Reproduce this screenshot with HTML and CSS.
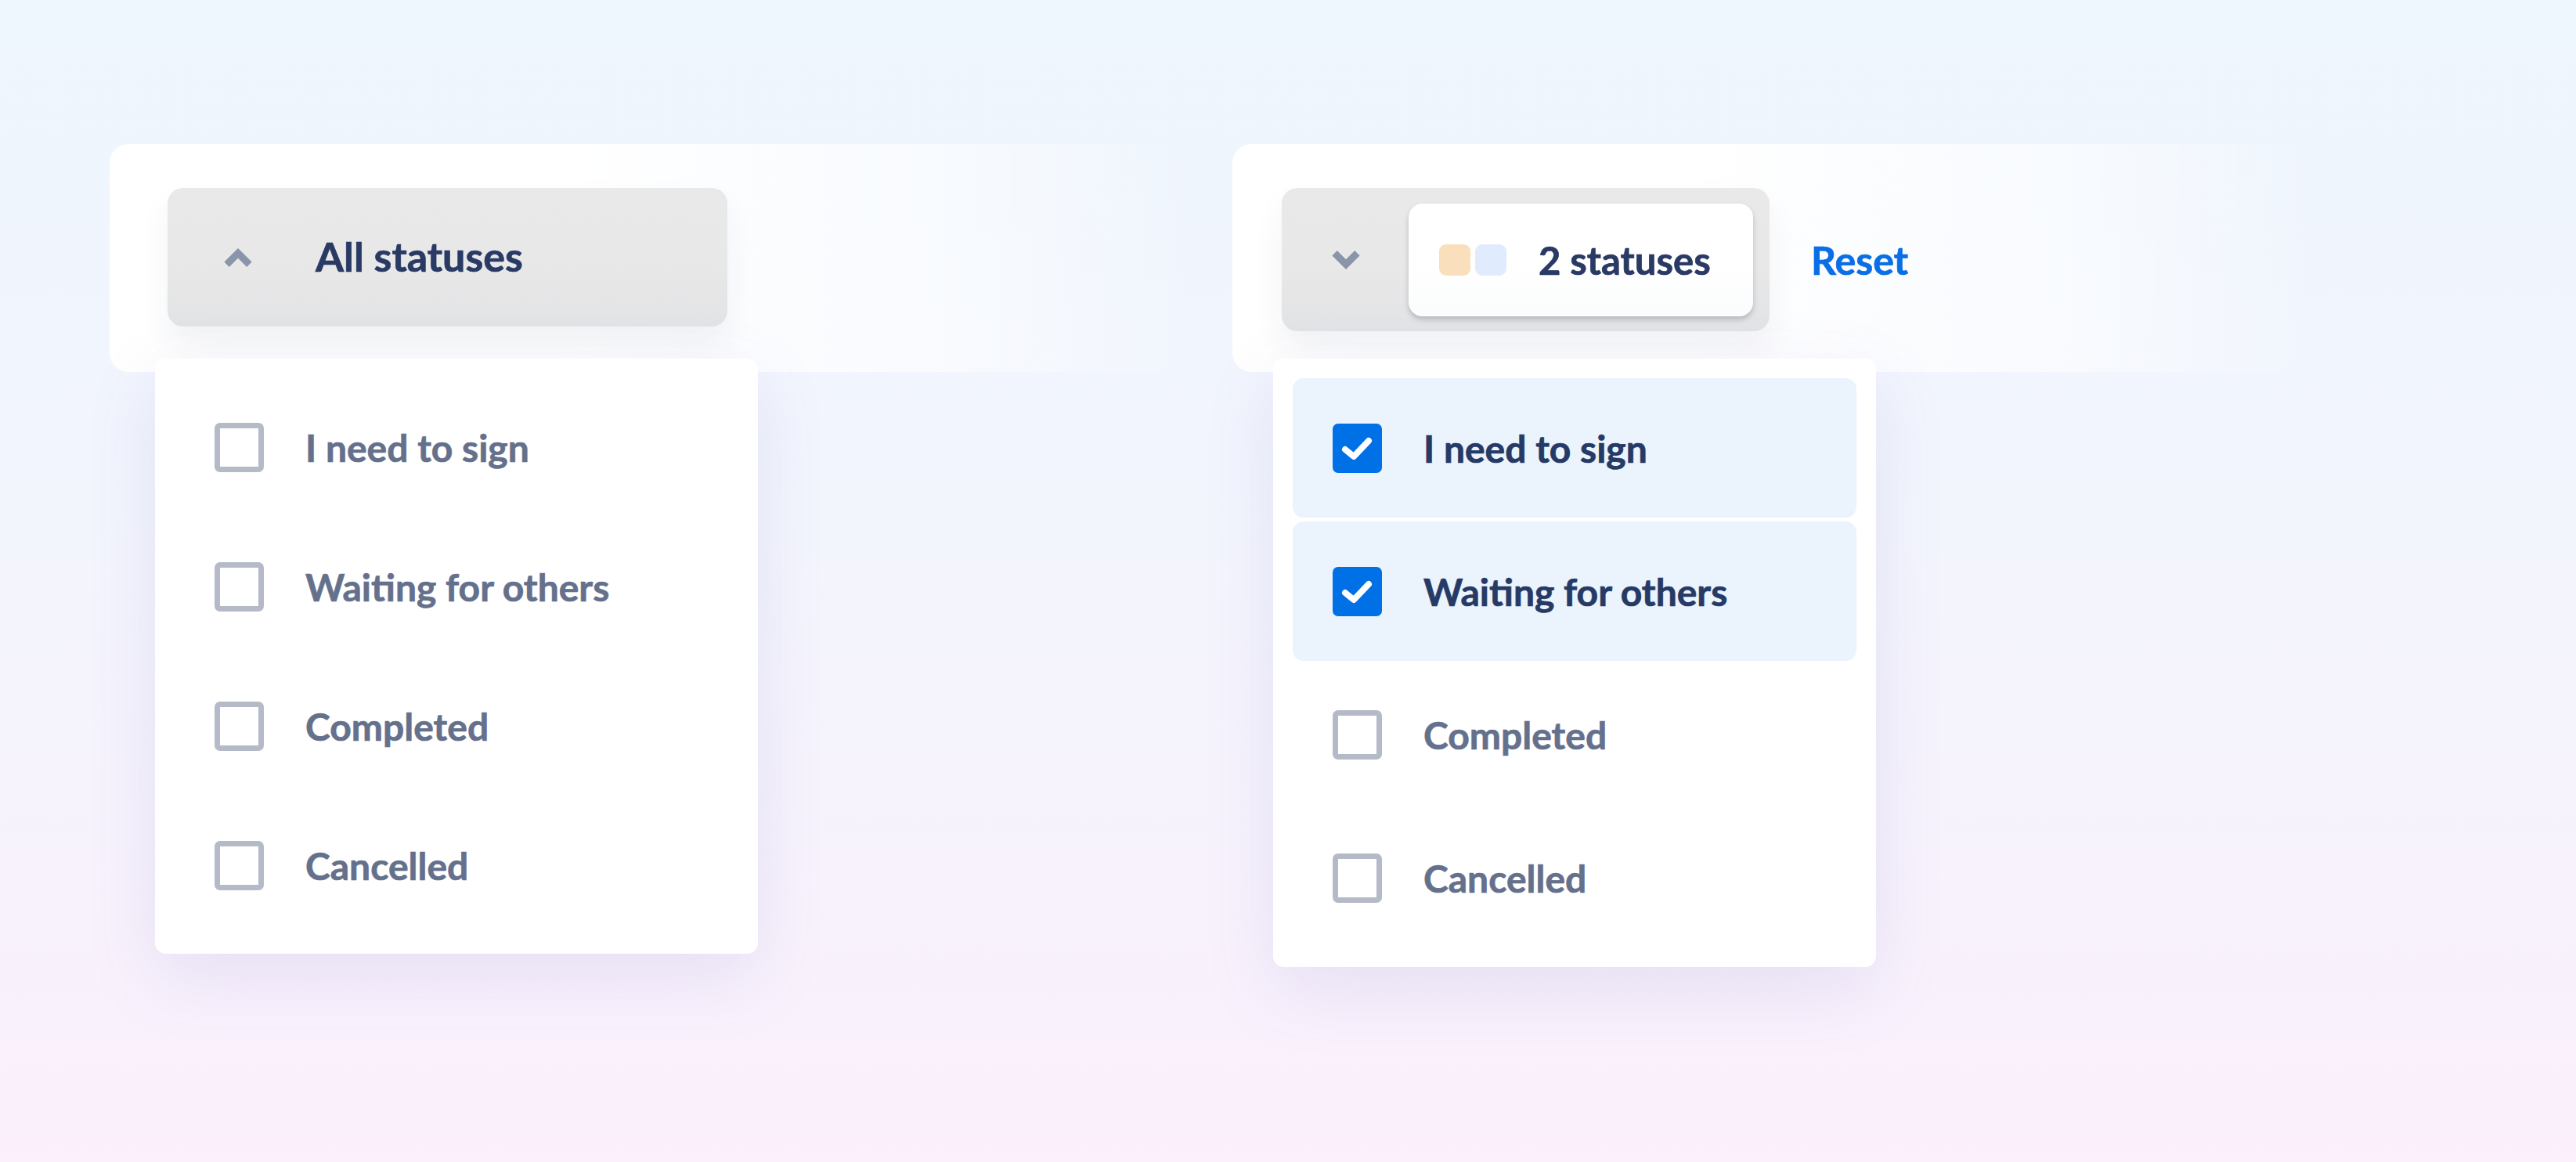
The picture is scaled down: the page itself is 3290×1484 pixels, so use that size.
FILE: index.html
```html
<!DOCTYPE html>
<html>
  <head>
    <title>Status filter</title>
    <link rel="stylesheet" href="styles.css">
  </head>
  <body>
    <main class="stage">

      <section class="filter filter-empty">
        <div class="filter-bar">
          <button class="select">
            <svg class="chevron" viewBox="0 0 38 24" width="38" height="24">
              <polyline points="4.6,20.8 19,6.4 33.4,20.8" />
            </svg>
            <span class="select-label">All statuses</span>
          </button>
        </div>

        <ul class="menu">
          <li class="option">
            <span class="box"></span>
            <span class="option-label">I need to sign</span>
          </li>
          <li class="option">
            <span class="box"></span>
            <span class="option-label">Waiting for others</span>
          </li>
          <li class="option">
            <span class="box"></span>
            <span class="option-label">Completed</span>
          </li>
          <li class="option">
            <span class="box"></span>
            <span class="option-label">Cancelled</span>
          </li>
        </ul>
      </section>

      <!-- filter with two statuses picked -->
      <section class="filter filter-picked">
        <div class="filter-bar">
          <button class="select">
            <svg class="chevron" viewBox="0 0 38 24" width="38" height="24">
              <polyline points="4.6,3.2 19,17.6 33.4,3.2" />
            </svg>
            <span class="chip">
              <span class="swatch swatch-sign"></span>
              <span class="swatch swatch-wait"></span>
              <span class="chip-label">2 statuses</span>
            </span>
          </button>
          <a class="reset" href="#">Reset</a>
        </div>

        <ul class="menu">
          <li class="option checked">
            <span class="box">
              <svg viewBox="0 0 63 63" width="63" height="63"><polyline points="16,33 27,42 46,22" /></svg>
            </span>
            <span class="option-label">I need to sign</span>
          </li>
          <li class="option checked">
            <span class="box">
              <svg viewBox="0 0 63 63" width="63" height="63"><polyline points="16,33 27,42 46,22" /></svg>
            </span>
            <span class="option-label">Waiting for others</span>
          </li>
          <li class="option">
            <span class="box"></span>
            <span class="option-label">Completed</span>
          </li>
          <li class="option">
            <span class="box"></span>
            <span class="option-label">Cancelled</span>
          </li>
        </ul>
      </section>

    </main>
  </body>
</html>
```

FILE: styles.css
```css
html, body {
  margin: 0;
  height: 100%;
}

body {
  width: 3290px;
  height: 1484px;
  overflow: hidden;
  font-family: Lato, "Noto Sans", sans-serif;
  font-weight: 700;
  -webkit-text-stroke: 0.7px currentColor;
  background: linear-gradient(180deg, #eef6fe 0%, #f3f5fd 45%, #f8f2fc 80%, #fbf0fc 100%);
}

.stage {
  display: flex;
  gap: 44px;
  padding: 184px 0 0 140px;
}

.filter {
  position: relative;
  width: 1390px;
}

.filter-bar {
  display: flex;
  align-items: flex-start;
  gap: 53px;
  height: 291px;
  box-sizing: border-box;
  padding: 56px 0 0 74px;
  border-radius: 24px;
  background: linear-gradient(90deg, #fff 0%, #fff 42%, rgba(255, 255, 255, 0.6) 72%, rgba(255, 255, 255, 0) 100%);
}

.filter-picked .filter-bar {
  padding-left: 63px;
}

/* gray select button */
.select {
  display: flex;
  align-items: center;
  border: 0;
  margin: 0;
  font: inherit;
  cursor: pointer;
  border-radius: 20px;
  background: linear-gradient(180deg, #e9e9e9 0%, #e8e8e8 55%, #e2e3e5 100%);
  box-shadow: 0 22px 40px rgba(40, 50, 80, 0.06);
}

.filter-empty .select {
  width: 715px;
  height: 177px;
  padding: 0 0 0 71px;
}

.filter-picked .select {
  height: 183px;
  padding: 20px 21px 20px 63px;
  box-sizing: border-box;
}

.chevron {
  flex: none;
  fill: none;
  stroke: #8a95aa;
  stroke-width: 9;
}

.select-label {
  margin-left: 80px;
  margin-top: -3px;
  font-size: 52px;
  color: #293a64;
}

/* selected summary chip */
.chip {
  display: flex;
  align-items: center;
  width: 440px;
  height: 144px;
  box-sizing: border-box;
  margin-left: 61px;
  padding-left: 39px;
  border-radius: 18px;
  background: linear-gradient(180deg, #fff 0%, #fff 55%, #fbfcfd 100%);
  box-shadow: 0 4px 6px rgba(60, 70, 100, 0.28);
}

.swatch {
  width: 40px;
  height: 40px;
  border-radius: 9px;
  margin-right: 6px;
}

.swatch-sign {
  background: #f9dfbb;
}

.swatch-wait {
  background: #e0ecfd;
}

.chip-label {
  margin-left: 35px;
  font-size: 49px;
  color: #293a64;
}

.reset {
  margin-top: 62px;
  font-size: 50px;
  color: #0a6fe6;
  text-decoration: none;
}

/* dropdown list */
.menu {
  position: absolute;
  top: 274px;
  left: 58px;
  width: 770px;
  margin: 0;
  padding: 24px 25px;
  box-sizing: border-box;
  list-style: none;
  background: #fff;
  border-radius: 14px;
  box-shadow: 0 30px 90px rgba(110, 100, 190, 0.13);
}

.filter-picked .menu {
  left: 52px;
  padding: 25px;
  display: flex;
  flex-direction: column;
  gap: 5px;
}

.option {
  display: flex;
  align-items: center;
  height: 178px;
  padding-left: 51px;
  border-radius: 14px;
}

.option.checked {
  background: #ebf3fd;
}

.box {
  flex: none;
  width: 63px;
  height: 63px;
  box-sizing: border-box;
  border: 7px solid #b4bac7;
  border-radius: 7px;
  background: #fff;
}

.checked .box {
  border: 0;
  background: #0070e6;
}

.box svg {
  display: block;
  fill: none;
  stroke: #fff;
  stroke-width: 8;
  stroke-linecap: round;
  stroke-linejoin: round;
}

.option-label {
  margin-left: 53px;
  font-size: 48px;
  color: #65718c;
}

.checked .option-label {
  color: #263a66;
}
```
